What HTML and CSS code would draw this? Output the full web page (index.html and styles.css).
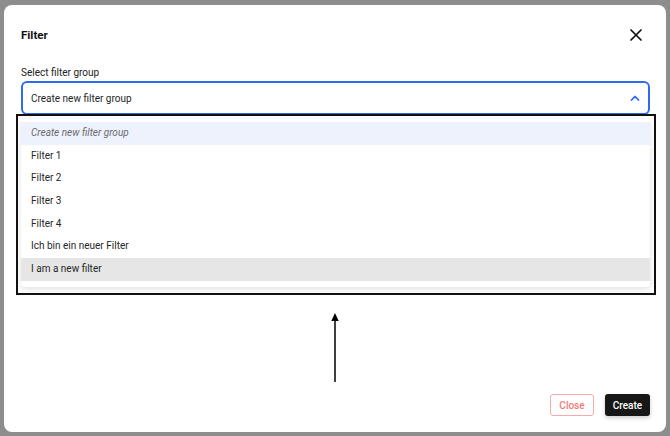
FILE: index.html
```html
<!DOCTYPE html>
<html lang="en">
<head>
    <meta charset="UTF-8">
    <meta name="viewport" content="width=device-width, initial-scale=1.0">
    <title>Filter</title>
    <link rel="stylesheet" href="styles.css">
</head>
<body>
    <div class="modal">
        <header class="modal-header">
            <h1>Filter</h1>
            <button class="icon-btn" aria-label="Close">
                <svg width="12" height="12" viewBox="0 0 12 12">
                    <path d="M1 1L11 11M11 1L1 11" stroke="#111" stroke-width="1.7" stroke-linecap="round"/>
                </svg>
            </button>
        </header>

        <div class="field">
            <label class="field-label">Select filter group</label>
            <div class="select-wrap">
                <div class="select">
                    <span>Create new filter group</span>
                    <svg width="10" height="6" viewBox="0 0 10 6">
                        <path d="M1.5 5L5 1.5L8.5 5" fill="none" stroke="#2563eb" stroke-width="1.7" stroke-linecap="round" stroke-linejoin="round"/>
                    </svg>
                </div>
                <ul class="menu">
                    <li class="placeholder">Create new filter group</li>
                    <li>Filter 1</li>
                    <li>Filter 2</li>
                    <li>Filter 3</li>
                    <li>Filter 4</li>
                    <li>Ich bin ein neuer Filter</li>
                    <li class="hovered">I am a new filter</li>
                </ul>
            </div>
        </div>

        <footer class="modal-footer">
            <button class="btn btn-outline">Close</button>
            <button class="btn btn-dark">Create</button>
        </footer>

        <!-- annotation overlay -->
        <div class="mark-box"></div>
        <svg class="mark-arrow" width="10" height="72" viewBox="0 0 10 72">
            <path d="M5 9V70" stroke="#000" stroke-width="1.5"/>
            <path d="M1.3 9L5 1L8.7 9Z" fill="#000"/>
        </svg>
    </div>
</body>
</html>
```

FILE: styles.css
```css
* {
    margin: 0;
    padding: 0;
    box-sizing: border-box;
    font-family: 'Roboto', 'Liberation Sans', sans-serif;
}

body {
    background-color: #8d8d8d;
    color: #1f1f1f;
    height: 436px;
    overflow: hidden;
}

.modal {
    position: relative;
    width: 662px;
    height: 427px;
    margin: 5px 4px 0;
    background-color: #fff;
    border-radius: 8px;
    padding: 0 16px 16px 17px;
    display: flex;
    flex-direction: column;
}

.modal-header {
    display: flex;
    justify-content: space-between;
    align-items: center;
    height: 61px;
    padding-bottom: 1px;
}

.modal-header h1 {
    font-size: 11.5px;
    font-weight: 700;
    color: #111;
}

.icon-btn {
    background: none;
    border: none;
    display: flex;
    margin-right: 8px;
}

.field-label {
    display: block;
    font-size: 10px;
    line-height: 14px;
    color: #222;
    margin-bottom: 1px;
}

.select-wrap {
    position: relative;
}

.select {
    height: 34px;
    border: 2px solid #2f6bf2;
    border-radius: 6px;
    display: flex;
    align-items: center;
    justify-content: space-between;
    padding: 0 8px 0 8px;
    font-size: 10px;
    color: #1f1f1f;
}

.menu {
    position: absolute;
    top: 38px;
    left: 0;
    right: 0;
    list-style: none;
    background-color: #fff;
    border-radius: 4px;
    padding: 3px 0 6px;
    box-shadow: 0 2px 6px rgba(0, 0, 0, 0.12);
}

.menu li {
    height: 22.7px;
    line-height: 22.7px;
    padding-left: 10px;
    font-size: 10px;
    color: #262626;
}

.menu li.placeholder {
    background-color: #edf2fd;
    color: #6b6b6b;
    font-style: italic;
}

.menu li.hovered {
    background-color: #e6e6e6;
}

.modal-footer {
    margin-top: auto;
    display: flex;
    justify-content: flex-end;
    gap: 11px;
}

.btn {
    height: 22px;
    font-size: 10px;
    font-weight: 500;
    border-radius: 3px;
    cursor: pointer;
}

.btn-outline {
    width: 44px;
    background-color: #fff;
    color: #f47a7a;
    border: 1px solid #f8aaaa;
}

.btn-dark {
    width: 45px;
    background-color: #171717;
    color: #fff;
    border: none;
    box-shadow: 0 2px 4px rgba(0, 0, 0, 0.2);
}

.mark-box {
    position: absolute;
    left: 12px;
    top: 109px;
    width: 640px;
    height: 181px;
    border: 2px solid #111;
    pointer-events: none;
}

.mark-arrow {
    position: absolute;
    left: 326px;
    top: 307px;
}
```
